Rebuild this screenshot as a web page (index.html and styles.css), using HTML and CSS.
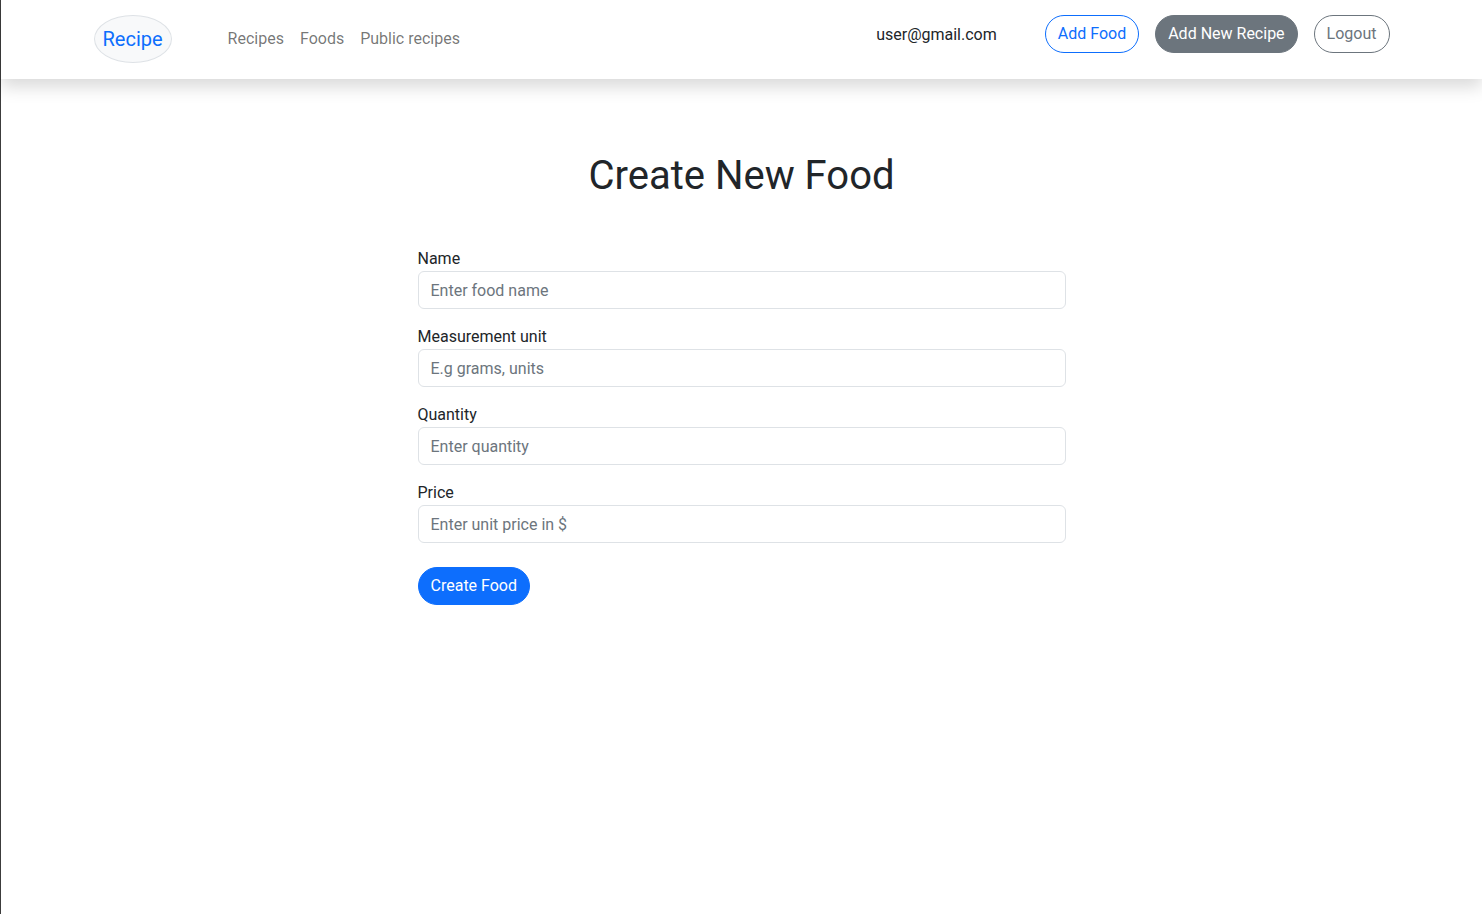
FILE: index.html
```html
<!DOCTYPE html>
<html lang="en">
<head>
<meta charset="utf-8">
<title>Create New Food</title>
<link rel="stylesheet" href="styles.css">
</head>
<body>
<div class="page">
  <nav class="navbar">
    <div class="container nav-inner">
      <a class="brand" href="#">Recipe</a>
      <ul class="nav-links">
        <li><a href="#">Recipes</a></li>
        <li><a href="#">Foods</a></li>
        <li><a href="#">Public recipes</a></li>
      </ul>
      <div class="nav-right">
        <span class="user">user@gmail.com</span>
        <div class="actions">
          <a class="btn btn-outline-primary" href="#">Add Food</a>
          <a class="btn btn-secondary" href="#">Add New Recipe</a>
          <a class="btn btn-outline-secondary" href="#">Logout</a>
        </div>
      </div>
    </div>
  </nav>
  <main class="main">
    <h1 class="title">Create New Food</h1>
    <form class="form">
      <div class="group">
        <label for="name">Name</label>
        <input id="name" type="text" placeholder="Enter food name">
      </div>
      <div class="group">
        <label for="unit">Measurement unit</label>
        <input id="unit" type="text" placeholder="E.g grams, units">
      </div>
      <div class="group">
        <label for="qty">Quantity</label>
        <input id="qty" type="text" placeholder="Enter quantity">
      </div>
      <div class="group">
        <label for="price">Price</label>
        <input id="price" type="text" placeholder="Enter unit price in $">
      </div>
      <button type="button" class="btn btn-primary submit">Create Food</button>
    </form>
  </main>
</div>
</body>
</html>
```

FILE: styles.css
```css
* { box-sizing: border-box; }
html, body { margin: 0; padding: 0; height: 100%; }
body {
  font-family: Roboto, "Noto Sans", "Liberation Sans", sans-serif;
  font-size: 16px;
  line-height: 1.5;
  color: #212529;
  background: #fff;
}
.page {
  min-height: 100%;
  border-left: 1px solid #3c3c3c;
}
a { text-decoration: none; }

.navbar {
  background: #fff;
  height: 79px;
  box-shadow: 0 8px 16px rgba(0,0,0,.15);
  position: relative;
}
.container {
  width: 1320px;
  margin: 0 auto;
  padding: 0 12px;
}
.nav-inner {
  display: flex;
  align-items: center;
  height: 100%;
  padding-left: 12px;
}
.brand {
  display: inline-block;
  margin-top: -1px;
  padding: 8px 8px 7px;
  font-size: 20px;
  line-height: 31px;
  color: #0d6efd;
  background: #f8f9fa;
  border: 1px solid #dee2e6;
  border-radius: 50%;
}
.nav-links {
  display: flex;
  list-style: none;
  margin: -2px 0 0 48px;
  padding: 0;
}
.nav-links a {
  display: block;
  padding: 8px 8px;
  color: rgba(0,0,0,.55);
}
.nav-right {
  margin-left: auto;
  display: flex;
  align-items: center;
  margin-top: -11px;
}
.user {
  margin-right: 48px;
  color: #212529;
  position: relative;
  top: 1px;
}
.actions { display: flex; gap: 16px; }
.btn {
  display: inline-block;
  padding: 6px 12px;
  font-size: 16px;
  line-height: 24px;
  border: 1px solid transparent;
  border-radius: 50rem;
  font-family: inherit;
  cursor: pointer;
}
.btn-outline-primary { color: #0d6efd; border-color: #0d6efd; }
.btn-secondary { color: #fff; background: #6c757d; border-color: #6c757d; }
.btn-outline-secondary { color: #6c757d; border-color: #6c757d; }
.btn-primary { color: #fff; background: #0d6efd; border-color: #0d6efd; }

.main {
  width: 648px;
  margin: 0 auto;
  padding-top: 73px;
}
.title {
  margin: 0 0 47px;
  text-align: center;
  font-size: 40px;
  font-weight: 400;
  line-height: 48px;
}
.group { margin-bottom: 16px; }
.group label { display: block; line-height: 24px; }
.group input {
  display: block;
  width: 100%;
  height: 38px;
  padding: 6px 12px;
  font-family: inherit;
  font-size: 16px;
  color: #212529;
  border: 1px solid #dee2e6;
  border-radius: 6px;
  outline: none;
}
.group input::placeholder { color: #6c757d; }
.submit { margin-top: 8px; }
```
